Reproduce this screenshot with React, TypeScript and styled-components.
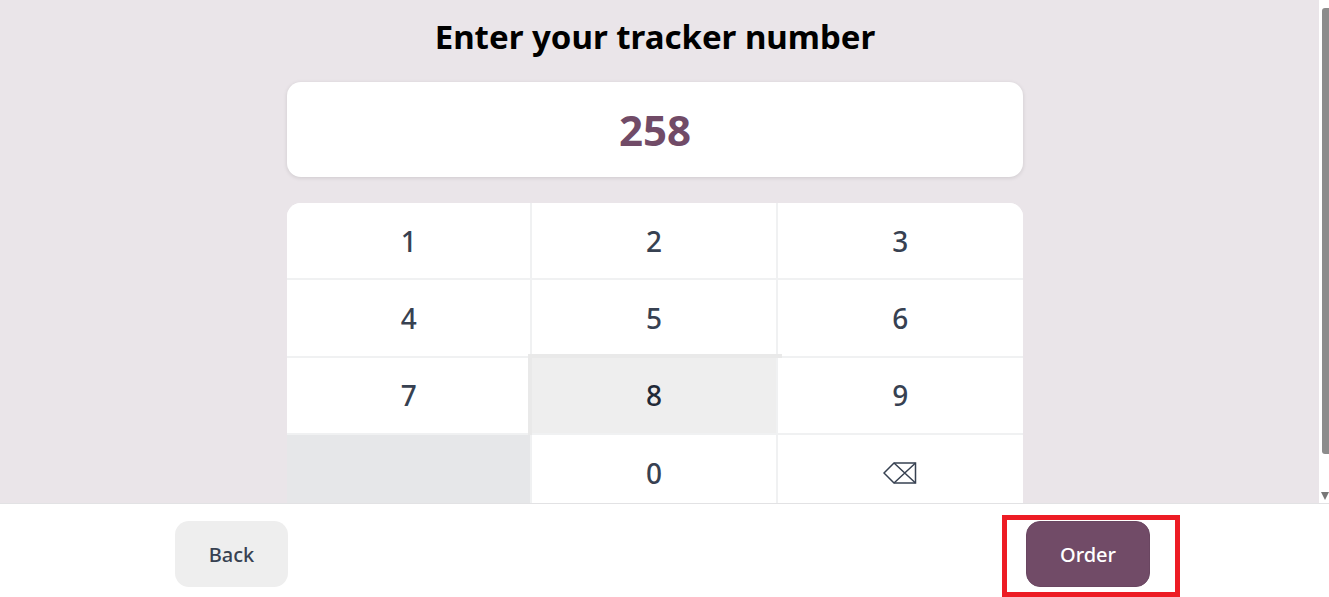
import React from 'react';
import styled, {createGlobalStyle} from "styled-components";

const Global = createGlobalStyle`
    html, body, #root {
        margin: 0;
        height: 100%;
        overflow: hidden;
    }

    body {
        font-family: "Noto Sans", "Open Sans", sans-serif;
        background: #fff;
    }
`

const keys = ["1", "2", "3", "4", "5", "6", "7", "8", "9", "", "0", "back"];

const BackspaceIcon = () => (
    <svg width="34" height="22" viewBox="0 0 34 22" fill="none" stroke="#374151" strokeWidth="1.5">
        <path d="M1 11 L11 1 H32.5 V21 H11 Z"/>
        <path d="M11 1 L32.5 21 M32.5 1 L11 21"/>
    </svg>
);

export default function App() {
    return (
        <Page>
            <Global/>
            <Body>
                <Scroll>
                    <Container>
                        <Title>Enter your tracker number</Title>
                        <Display>258</Display>
                        <Numpad>
                            {keys.map((k, i) => (
                                <Key key={i} $active={k === "8"} $blank={k === ""}>
                                    {k === "back" ? <BackspaceIcon/> : k}
                                </Key>
                            ))}
                        </Numpad>
                    </Container>
                </Scroll>
                <ScrollBar>
                    <Thumb/>
                    <ArrowDown/>
                </ScrollBar>
            </Body>
            <Footer>
                <BackButton>Back</BackButton>
                <Highlight>
                    <OrderButton>Order</OrderButton>
                </Highlight>
            </Footer>
        </Page>
    );
}

const Page = styled.div`
    height: 597px;
    display: flex;
    flex-direction: column;
`

const Body = styled.div`
    height: 503px;
    flex: none;
    display: flex;
`

const Scroll = styled.main`
    flex: 1;
    overflow: hidden;
    background: #eae5e9;
    padding-right: 9px;
`

const ScrollBar = styled.div`
    width: 10px;
    flex: none;
    box-sizing: border-box;
    padding: 8px 0 3px 3px;
    display: flex;
    flex-direction: column;
    justify-content: space-between;
    background: #fff;
`

const Thumb = styled.div`
    height: 446px;
    background: #8c8c8c;
    border-radius: 3px 0 0 3px;
`

const ArrowDown = styled.div`
    width: 0;
    height: 0;
    margin-left: -1px;
    border-left: 4px solid transparent;
    border-right: 4px solid transparent;
    border-top: 8px solid #777;
`

const Container = styled.div`
    width: 736px;
    margin: 0 auto;
`

const Title = styled.h1`
    margin: 0;
    height: 82px;
    padding-top: 12px;
    box-sizing: border-box;
    text-align: center;
    color: #000;
    font-size: 33px;
    line-height: 50px;
    font-weight: 700;
`

const Display = styled.div`
    height: 95px;
    margin-bottom: 26px;
    display: flex;
    align-items: center;
    justify-content: center;
    background: #fff;
    border-radius: 14px;
    box-shadow: 0 1px 4px rgba(0, 0, 0, 0.12);
    color: #714b67;
    font-size: 42px;
    font-weight: 700;
`

const Numpad = styled.div`
    display: grid;
    grid-template-columns: repeat(3, 1fr);
    grid-auto-rows: 77.3px;
    background: #fff;
    border-radius: 14px 14px 0 0;
    overflow: hidden;
`

const Key = styled.div<{ $active?: boolean; $blank?: boolean }>`
    display: flex;
    align-items: center;
    justify-content: center;
    box-sizing: border-box;
    color: #374151;
    font-size: 28px;
    font-weight: 500;
    border-right: 2px solid #f0f1f2;
    border-bottom: 2px solid #f0f1f2;
    background: ${p => p.$active ? "#eeeeee" : p.$blank ? "#e6e7e9" : "#fff"};
    ${p => p.$active && "color: #1f2937; box-shadow: 0 0 0 4px #e9e9e9;"}

    &:nth-child(3n) {
        border-right: 0;
    }
`

const Footer = styled.footer`
    flex: 1;
    display: flex;
    justify-content: space-between;
    align-items: flex-start;
    padding: 17px 179px 0 175px;
    border-top: 1px solid #e2e2e4;
    background: #fff;
`

const BackButton = styled.button`
    width: 113px;
    height: 66px;
    border: 0;
    border-radius: 14px;
    background: #eeeeee;
    color: #374151;
    font-family: inherit;
    font-size: 20px;
    font-weight: 500;
`

const OrderButton = styled.button`
    display: block;
    width: 124px;
    height: 66px;
    border: 1px solid #6a4661;
    border-radius: 14px;
    background: #714b67;
    color: #fff;
    font-family: inherit;
    font-size: 20px;
    font-weight: 500;
`

const Highlight = styled.div`
    position: relative;

    &::after {
        content: "";
        position: absolute;
        left: -24px;
        right: -30px;
        top: -6px;
        bottom: -10px;
        border: 5px solid #ed1c24;
        pointer-events: none;
    }
`
